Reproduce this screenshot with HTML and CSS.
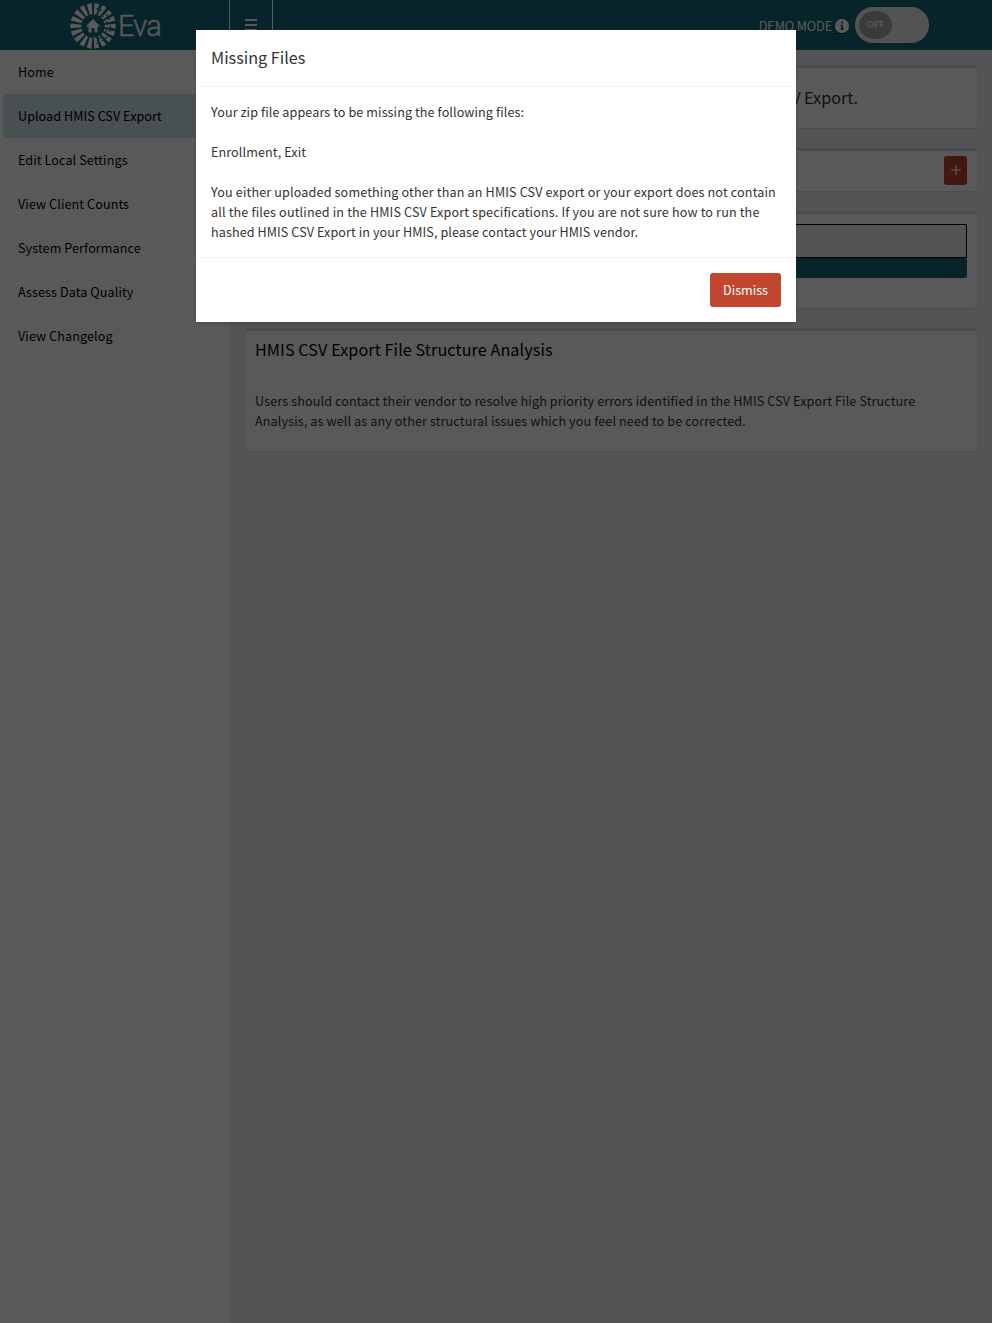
FILE: index.html
```html
<!DOCTYPE html>
<html lang="en">
<head>
<meta charset="utf-8">
<title>Eva</title>
<link rel="stylesheet" href="styles.css">
</head>
<body>
<div class="app">
  <header class="header">
    <div class="logo">
      <svg class="logo-mark" viewBox="-23 -23 46 46">
        <circle class="rays" r="17.2" pathLength="180"/>
        <path class="gap" d="M3-17.500A17.800 17.800 0 0 1 3 17.500"/>
        <path class="gap inner" d="M3-13.700A14 14 0 0 1 3 13.700"/>
        <path class="house" d="M0-7 7.500.5H4.500V6.500H1.500V2H-1.500V6.500H-4.500V.5H-7.500Z"/>
      </svg>
      <span class="logo-text">Eva</span>
    </div>
    <div class="toggle"><i></i><i></i><i></i></div>
    <div class="demo">
      <span class="demo-label">DEMO MODE</span>
      <span class="info"><svg viewBox="0 0 14 14"><circle cx="7" cy="7" r="7"/><path d="M5.500 5.700H8V9.500H9V10.700H5.200V9.500H6.200V6.900H5.500ZM6.200 2.800H8V4.600H6.200Z"/></svg></span>
      <div class="switch"><span class="knob">OFF</span></div>
    </div>
  </header>
  <div class="columns">
    <nav class="sidebar">
      <a class="item">Home</a>
      <a class="item active">Upload HMIS CSV Export</a>
      <a class="item">Edit Local Settings</a>
      <a class="item">View Client Counts</a>
      <a class="item">System Performance</a>
      <a class="item">Assess Data Quality</a>
      <a class="item">View Changelog</a>
    </nav>
    <main class="content">
      <section class="box intro"><h4>Upload your hashed HMIS CSV Export.</h4></section>
      <section class="box instructions"><button class="plus"><svg viewBox="0 0 10 10"><path d="M5 0V10M0 5H10"/></svg></button></section>
      <section class="box upload"><div class="file"></div><div class="progress"></div></section>
      <section class="box analysis">
        <h3>HMIS CSV Export File Structure Analysis</h3>
        <p>Users should contact their vendor to resolve high priority errors identified in the HMIS CSV Export File Structure<br>Analysis, as well as any other structural issues which you feel need to be corrected.</p>
      </section>
    </main>
  </div>
</div>
<div class="backdrop">
  <div class="modal">
    <div class="modal-header">Missing Files</div>
    <div class="modal-body">
      <p>Your zip file appears to be missing the following files:</p>
      <p>Enrollment, Exit</p>
      <p class="details">You either uploaded something other than an HMIS CSV export or your export does not contain<br>all the files outlined in the HMIS CSV Export specifications. If you are not sure how to run the<br><span class="vendor">hashed HMIS CSV Export in your HMIS, please contact your HMIS vendor.</span></p>
    </div>
    <div class="modal-footer"><button class="dismiss">Dismiss</button></div>
  </div>
</div>
</body>
</html>
```
FILE: styles.css
```css
* { box-sizing: border-box; }
body {
  margin: 0;
  font-family: "Noto Sans CJK SC", sans-serif;
  font-size: 12.6px;
  line-height: 20px;
  color: #333;
}
h3, h4, p { margin: 0; font-weight: 400; }
button { border: 0; font: inherit; }
.app { height: 1323px; overflow: hidden; background: #ecf0f5; }
.header { display: flex; height: 50px; background: #16697a; color: #fff; }
.logo { display: flex; width: 229px; padding: 3px 0 0 70px; }
.logo-mark { width: 46px; height: 46px; flex: none; }
.rays { fill: none; stroke: #fff; stroke-width: 11; stroke-dasharray: 6.2 3.8; stroke-dashoffset: 3; }
.gap { fill: none; stroke: #16697a; stroke-width: 1.2; stroke-dasharray: 6.500 5.500; }
.inner { stroke-dasharray: 4 5; stroke-dashoffset: 4; }
.house { fill: #fff; }
.logo-text { margin-left: 2px; font: 300 29px/47px Roboto, sans-serif; letter-spacing: -.8px; -webkit-text-stroke: .3px #fff; }
.toggle {
  display: flex; flex-direction: column; gap: 3px;
  width: 44px; padding: 19px 15px 0;
  border-left: 1px solid #fff; border-right: 1px solid #fff;
}
.toggle i { height: 2px; background: #fff; }
.demo { display: flex; margin-left: auto; padding: 7px 63px 0 0; }
.demo-label { padding-top: 9px; margin-right: 3px; letter-spacing: -.1px; }
.info { width: 14px; height: 15px; margin: 12px 6px 0 0; border-bottom: 1px dotted #000; }
.info svg { display: block; width: 14px; height: 14px; fill: #fff; }
.info path { fill: #16697a; }
.switch { width: 74px; height: 36px; padding: 4px; border-radius: 18px; background: #eee; }
.knob {
  display: block; width: 33px; height: 28px; border-radius: 16px / 14px;
  background: #aaa; color: #eee; text-align: center;
  font-size: 9px; font-weight: 700; line-height: 27px;
}
.columns { display: flex; height: 1273px; }
.sidebar { width: 230px; background: #fff; letter-spacing: .09px; }
.item { display: block; height: 44px; padding: 12px 15px; border-left: 3px solid transparent; background-clip: padding-box; color: #000; }
.active { background-color: #d0e4e8; letter-spacing: .05px; }
.content { flex: 1; display: flex; flex-direction: column; gap: 20px; padding: 15px; }
.box { border-top: 3px solid #d2d6de; border-radius: 3px; background: #fff; box-shadow: 0 1px 1px rgba(0,0,0,.1); padding: 10px; }
.intro { height: 63px; padding: 19px 119px 0 0; text-align: right; }
.intro h4 { font-size: 16.2px; }
.instructions { height: 43px; padding: 5px 10px; display: flex; justify-content: flex-end; }
.plus { width: 23px; height: 29px; padding: 0; border-radius: 3px; background: #c2462e; }
.plus svg { display: block; width: 10px; height: 10px; margin: 0 auto 1px; stroke: #fff; stroke-width: 1.2; }
.upload { height: 97px; }
.file { height: 34px; border: 1px solid #000; background: #eee; }
.progress { height: 20px; border-radius: 3px; background: #16697a; }
.analysis { height: 123px; }
.analysis h3 { font-size: 16.2px; line-height: 20px; margin: -2px 0 32px; color: #000; letter-spacing: .08px; }
.analysis p { letter-spacing: .117px; }
.backdrop { position: absolute; inset: 0; padding-top: 30px; background: rgba(0,0,0,.65); }
.modal { width: 600px; height: 292px; margin: 0 auto; background: #fff; box-shadow: 0 2px 3px rgba(0,0,0,.125); }
.modal-header { height: 57px; padding: 17px 15px; font-size: 16.2px; border-bottom: 1px solid #f4f4f4; }
.modal-body { display: flex; flex-direction: column; gap: 20px; padding: 15px; height: 170px; letter-spacing: .09px; }
.details { letter-spacing: .145px; white-space: nowrap; }
.vendor { letter-spacing: .09px; }
.modal-footer { display: flex; justify-content: flex-end; padding: 15px; border-top: 1px solid #f4f4f4; }
.dismiss { width: 71px; height: 34px; padding: 0; border-radius: 3px; background: #c2462e; color: #fff; }
```
